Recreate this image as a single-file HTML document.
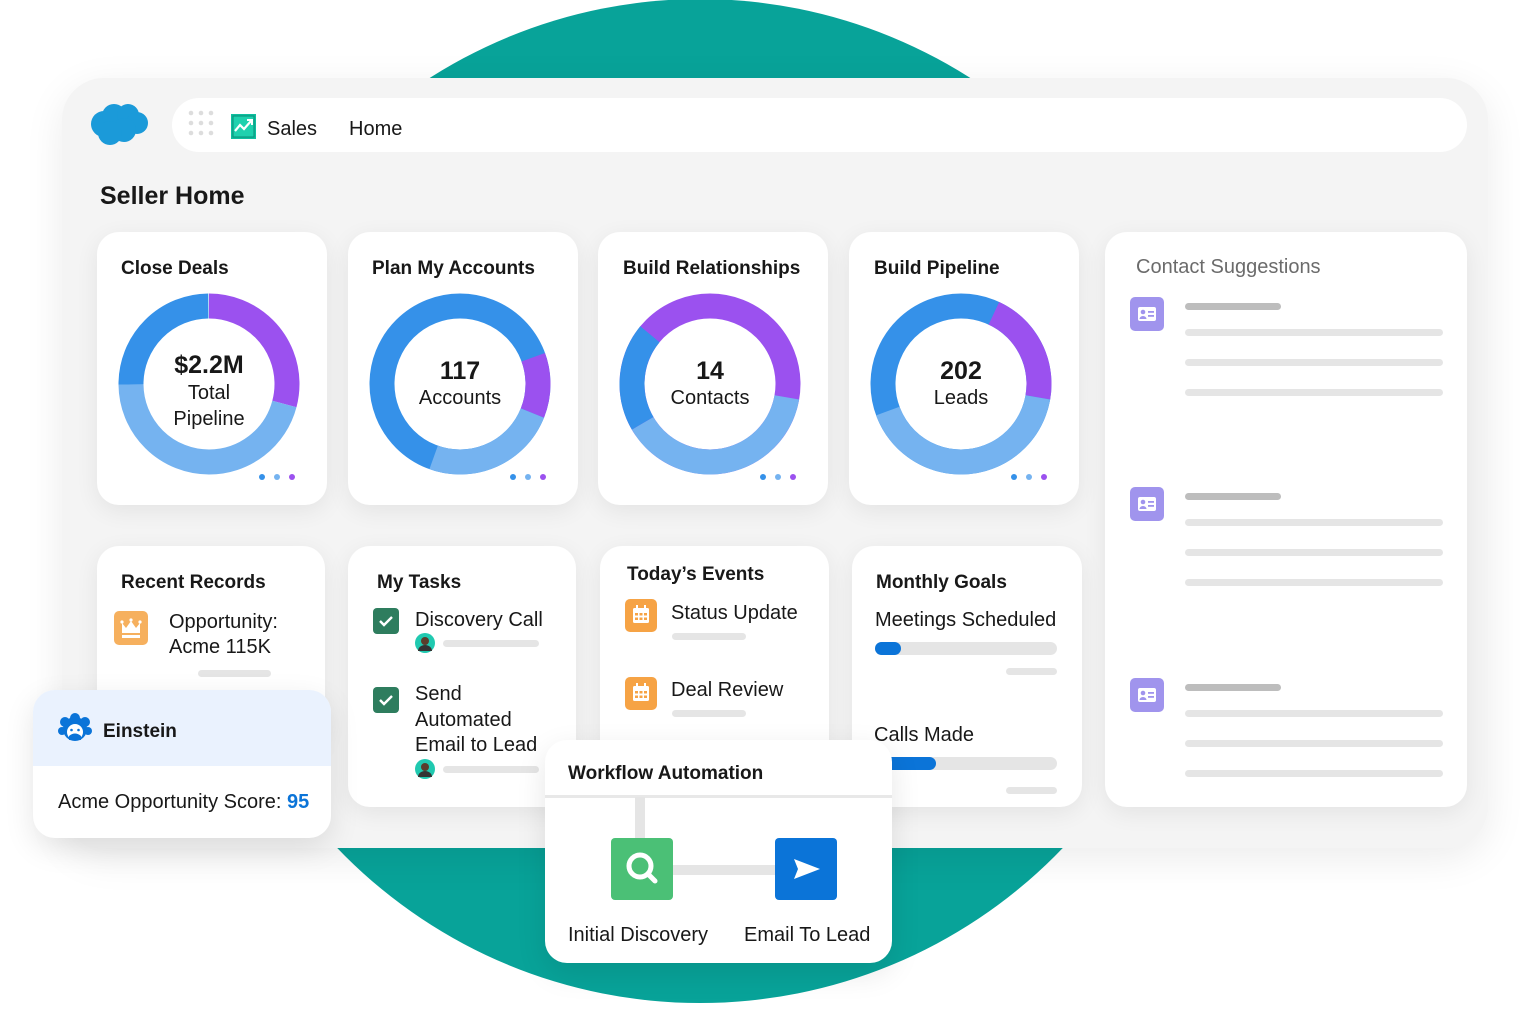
<!DOCTYPE html>
<html><head><meta charset="utf-8"><style>
*{margin:0;padding:0;box-sizing:border-box}
body{width:1536px;height:1024px;background:#fff;position:relative;overflow:hidden;font-family:"Liberation Sans",sans-serif;color:#181818}
.a{position:absolute}
.card{position:absolute;background:#fff;border-radius:22px;box-shadow:0 6px 24px rgba(0,0,0,.07)}
.t{position:absolute;font-weight:bold;font-size:19px;color:#181818;margin-top:2px}
.bar{position:absolute;height:7px;border-radius:4px;background:#e5e5e5}
.txt{position:absolute;font-size:20px;color:#181818;margin-top:1px}
</style></head><body>
<div class="a" style="left:198px;top:-1px;width:1004px;height:1004px;border-radius:50%;background:#08a399"></div>
<div class="a" style="left:62px;top:78px;width:1426px;height:770px;border-radius:42px;background:#f4f4f4;box-shadow:0 10px 40px rgba(0,0,0,.08)"></div>
<svg class="a" style="left:88px;top:102px" width="62" height="44" viewBox="0 0 62 44"><g fill="#1b9ad9"><circle cx="16" cy="22" r="13"/><circle cx="26" cy="14" r="12"/><circle cx="40" cy="13" r="11"/><circle cx="49" cy="21" r="11"/><circle cx="36" cy="28" r="12"/><circle cx="22" cy="31" r="12"/></g></svg>
<div class="a" style="left:172px;top:98px;width:1295px;height:54px;border-radius:27px;background:#fff"></div>
<svg class="a" style="left:187px;top:110px" width="28" height="28"><g fill="#ddd"><circle cx="4" cy="3" r="2.3"/><circle cx="14" cy="3" r="2.3"/><circle cx="24" cy="3" r="2.3"/><circle cx="4" cy="13" r="2.3"/><circle cx="14" cy="13" r="2.3"/><circle cx="24" cy="13" r="2.3"/><circle cx="4" cy="23" r="2.3"/><circle cx="14" cy="23" r="2.3"/><circle cx="24" cy="23" r="2.3"/></g></svg>
<svg class="a" style="left:231px;top:114px" width="25" height="25"><rect width="25" height="25" fill="#0fbf9f"/><rect x="2" y="2" width="21" height="21" fill="#1fd1ae" stroke="#0a8f78" stroke-width="1"/><path d="M4 17 L9 11 L13 15 L20 7" stroke="#fff" stroke-width="2.2" fill="none"/><path d="M16 6h5v5" stroke="#fff" stroke-width="2" fill="none"/></svg>
<div class="txt" style="left:267px;top:117px">Sales</div>
<div class="txt" style="left:349px;top:117px">Home</div>
<div class="a" style="left:100px;top:182px;font-size:25px;font-weight:bold">Seller Home</div>

<div class="card" style="left:97px;top:232px;width:230px;height:273px"></div>
<div class="card" style="left:348px;top:232px;width:230px;height:273px"></div>
<div class="card" style="left:598px;top:232px;width:230px;height:273px"></div>
<div class="card" style="left:849px;top:232px;width:230px;height:273px"></div>
<div class="t" style="left:121px;top:256px">Close Deals</div>
<div class="t" style="left:372px;top:256px">Plan My Accounts</div>
<div class="t" style="left:623px;top:256px">Build Relationships</div>
<div class="t" style="left:874px;top:256px">Build Pipeline</div>
<svg class="a" style="left:0;top:0" width="1100" height="520" fill="none" stroke-width="25">
<g transform="translate(209 384) rotate(-90)">
<circle r="78" pathLength="360" stroke="#9b51ef" stroke-dasharray="105 360"/>
<circle r="78" pathLength="360" stroke="#75b3f0" stroke-dasharray="165 360" stroke-dashoffset="-105"/>
<circle r="78" pathLength="360" stroke="#3591e9" stroke-dasharray="90 360" stroke-dashoffset="-270"/>
</g>
<g transform="translate(460 384) rotate(-90)">
<circle r="78" pathLength="360" stroke="#3591e9"/>
<circle r="78" pathLength="360" stroke="#9b51ef" stroke-dasharray="42 360" stroke-dashoffset="-70"/>
<circle r="78" pathLength="360" stroke="#75b3f0" stroke-dasharray="88 360" stroke-dashoffset="-112"/>
</g>
<g transform="translate(710 384) rotate(-90)">
<circle r="78" pathLength="360" stroke="#9b51ef"/>
<circle r="78" pathLength="360" stroke="#75b3f0" stroke-dasharray="140 360" stroke-dashoffset="-100"/>
<circle r="78" pathLength="360" stroke="#3591e9" stroke-dasharray="70 360" stroke-dashoffset="-240"/>
</g>
<g transform="translate(961 384) rotate(-90)">
<circle r="78" pathLength="360" stroke="#3591e9"/>
<circle r="78" pathLength="360" stroke="#9b51ef" stroke-dasharray="75 360" stroke-dashoffset="-25"/>
<circle r="78" pathLength="360" stroke="#75b3f0" stroke-dasharray="150 360" stroke-dashoffset="-100"/>
</g>
<g stroke="none">
<circle cx="262" cy="477" r="3" fill="#3591e9"/><circle cx="277" cy="477" r="3" fill="#75b3f0"/><circle cx="292" cy="477" r="3" fill="#9b51ef"/>
<circle cx="513" cy="477" r="3" fill="#3591e9"/><circle cx="528" cy="477" r="3" fill="#75b3f0"/><circle cx="543" cy="477" r="3" fill="#9b51ef"/>
<circle cx="763" cy="477" r="3" fill="#3591e9"/><circle cx="778" cy="477" r="3" fill="#75b3f0"/><circle cx="793" cy="477" r="3" fill="#9b51ef"/>
<circle cx="1014" cy="477" r="3" fill="#3591e9"/><circle cx="1029" cy="477" r="3" fill="#75b3f0"/><circle cx="1044" cy="477" r="3" fill="#9b51ef"/>
</g>
</svg>
<div class="a" style="left:129px;top:351px;width:160px;text-align:center;font-size:25px;font-weight:bold">$2.2M</div>
<div class="a" style="left:129px;top:380px;width:160px;text-align:center;font-size:20px;line-height:26px">Total<br>Pipeline</div>
<div class="a" style="left:380px;top:357px;width:160px;text-align:center;font-size:25px;font-weight:bold">117</div>
<div class="a" style="left:380px;top:387px;width:160px;text-align:center;font-size:20px">Accounts</div>
<div class="a" style="left:630px;top:357px;width:160px;text-align:center;font-size:25px;font-weight:bold">14</div>
<div class="a" style="left:630px;top:387px;width:160px;text-align:center;font-size:20px">Contacts</div>
<div class="a" style="left:881px;top:357px;width:160px;text-align:center;font-size:25px;font-weight:bold">202</div>
<div class="a" style="left:881px;top:387px;width:160px;text-align:center;font-size:20px">Leads</div>

<div class="card" style="left:1105px;top:232px;width:362px;height:575px"></div>
<div class="a" style="left:1136px;top:256px;font-size:20px;color:#6b6b6b">Contact Suggestions</div>
<svg class="a" style="left:1130px;top:297px" width="34" height="430">
<g id="ic"><rect width="34" height="34" rx="5" fill="#a094ed"/><rect x="8" y="10" width="18" height="14" rx="2" fill="#fff"/><circle cx="13" cy="15" r="2.3" fill="#a094ed"/><path d="M9.5 22a3.5 3 0 0 1 7 0z" fill="#a094ed"/><rect x="18" y="14" width="6" height="1.8" fill="#a094ed"/><rect x="18" y="18" width="6" height="1.8" fill="#a094ed"/></g>
<use href="#ic" y="190"/><use href="#ic" y="381"/></svg>
<div class="bar" style="left:1185px;top:303px;width:96px;background:#bdbdbd"></div>
<div class="bar" style="left:1185px;top:329px;width:258px"></div>
<div class="bar" style="left:1185px;top:359px;width:258px"></div>
<div class="bar" style="left:1185px;top:389px;width:258px"></div>
<div class="bar" style="left:1185px;top:493px;width:96px;background:#bdbdbd"></div>
<div class="bar" style="left:1185px;top:519px;width:258px"></div>
<div class="bar" style="left:1185px;top:549px;width:258px"></div>
<div class="bar" style="left:1185px;top:579px;width:258px"></div>
<div class="bar" style="left:1185px;top:684px;width:96px;background:#bdbdbd"></div>
<div class="bar" style="left:1185px;top:710px;width:258px"></div>
<div class="bar" style="left:1185px;top:740px;width:258px"></div>
<div class="bar" style="left:1185px;top:770px;width:258px"></div>

<div class="card" style="left:97px;top:546px;width:228px;height:200px"></div>
<div class="t" style="left:121px;top:570px">Recent Records</div>
<svg class="a" style="left:114px;top:611px" width="34" height="34"><rect width="34" height="34" rx="5" fill="#f6b05e"/><path d="M8 12l4 5 5-7 5 7 4-5v10H8z" fill="#fff"/><rect x="8" y="24" width="18" height="3" fill="#fff"/><circle cx="8" cy="11" r="1.6" fill="#fff"/><circle cx="17" cy="9" r="1.6" fill="#fff"/><circle cx="26" cy="11" r="1.6" fill="#fff"/></svg>
<div class="txt" style="left:169px;top:609px;line-height:25px">Opportunity:<br>Acme 115K</div>
<div class="bar" style="left:198px;top:670px;width:73px"></div>

<div class="card" style="left:348px;top:546px;width:228px;height:261px"></div>
<div class="t" style="left:377px;top:570px">My Tasks</div>
<svg class="a" style="left:373px;top:608px" width="26" height="26"><rect width="26" height="26" rx="4" fill="#2e7d5e"/><path d="M7 13l4 4 8-8" stroke="#fff" stroke-width="2.4" fill="none"/></svg>
<svg class="a" style="left:373px;top:687px" width="26" height="26"><rect width="26" height="26" rx="4" fill="#2e7d5e"/><path d="M7 13l4 4 8-8" stroke="#fff" stroke-width="2.4" fill="none"/></svg>
<div class="txt" style="left:415px;top:608px">Discovery Call</div>
<div class="txt" style="left:415px;top:681px;line-height:25.5px">Send<br>Automated<br>Email to Lead</div>
<svg class="a" style="left:415px;top:633px" width="20" height="20"><circle cx="10" cy="10" r="10" fill="#20c9b0"/><circle cx="10" cy="8" r="4" fill="#5a3d2b"/><path d="M3 18a7 6 0 0 1 14 0z" fill="#333"/></svg>
<svg class="a" style="left:415px;top:759px" width="20" height="20"><circle cx="10" cy="10" r="10" fill="#20c9b0"/><circle cx="10" cy="8" r="4" fill="#5a3d2b"/><path d="M3 18a7 6 0 0 1 14 0z" fill="#333"/></svg>
<div class="bar" style="left:443px;top:640px;width:96px"></div>
<div class="bar" style="left:443px;top:766px;width:96px"></div>

<div class="card" style="left:600px;top:546px;width:229px;height:220px"></div>
<div class="t" style="left:627px;top:562px">Today’s Events</div>
<svg class="a" style="left:625px;top:599px" width="32" height="33"><rect width="32" height="33" rx="5" fill="#f6a345"/><rect x="8" y="9" width="16" height="15" rx="1.5" fill="#fff"/><rect x="11" y="6" width="2" height="4" fill="#fff"/><rect x="19" y="6" width="2" height="4" fill="#fff"/><g fill="#f6a345"><rect x="10" y="14" width="3" height="2.5"/><rect x="14.5" y="14" width="3" height="2.5"/><rect x="19" y="14" width="3" height="2.5"/><rect x="10" y="18.5" width="3" height="2.5"/><rect x="14.5" y="18.5" width="3" height="2.5"/><rect x="19" y="18.5" width="3" height="2.5"/></g></svg>
<svg class="a" style="left:625px;top:677px" width="32" height="33"><rect width="32" height="33" rx="5" fill="#f6a345"/><rect x="8" y="9" width="16" height="15" rx="1.5" fill="#fff"/><rect x="11" y="6" width="2" height="4" fill="#fff"/><rect x="19" y="6" width="2" height="4" fill="#fff"/><g fill="#f6a345"><rect x="10" y="14" width="3" height="2.5"/><rect x="14.5" y="14" width="3" height="2.5"/><rect x="19" y="14" width="3" height="2.5"/><rect x="10" y="18.5" width="3" height="2.5"/><rect x="14.5" y="18.5" width="3" height="2.5"/><rect x="19" y="18.5" width="3" height="2.5"/></g></svg>
<div class="txt" style="left:671px;top:601px">Status Update</div>
<div class="txt" style="left:671px;top:678px">Deal Review</div>
<div class="bar" style="left:672px;top:633px;width:74px"></div>
<div class="bar" style="left:672px;top:710px;width:74px"></div>

<div class="card" style="left:852px;top:546px;width:230px;height:261px"></div>
<div class="t" style="left:876px;top:570px">Monthly Goals</div>
<div class="txt" style="left:875px;top:608px">Meetings Scheduled</div>
<div class="a" style="left:875px;top:642px;width:182px;height:13px;border-radius:7px;background:#e5e5e5"><div style="width:26px;height:13px;border-radius:7px;background:#0b74d8"></div></div>
<div class="bar" style="left:1006px;top:668px;width:51px"></div>
<div class="txt" style="left:874px;top:723px">Calls Made</div>
<div class="a" style="left:875px;top:757px;width:182px;height:13px;border-radius:7px;background:#e5e5e5"><div style="width:61px;height:13px;border-radius:7px;background:#0b74d8"></div></div>
<div class="bar" style="left:1006px;top:787px;width:51px"></div>

<div class="a" style="left:33px;top:690px;width:298px;height:148px;border-radius:22px;background:#fff;box-shadow:0 10px 30px rgba(0,0,0,.1);overflow:hidden"><div style="height:76px;background:#eaf2fe"></div></div>
<svg class="a" style="left:57px;top:713px" width="36" height="30"><g fill="#0b74d8"><circle cx="18" cy="16" r="12"/><circle cx="8" cy="9" r="5"/><circle cx="28" cy="9" r="5"/><circle cx="18" cy="5" r="5"/><circle cx="5" cy="18" r="4"/><circle cx="31" cy="18" r="4"/></g><circle cx="18" cy="19" r="8" fill="#fff"/><path d="M12 23q6-5 12 0v4h-12z" fill="#0b74d8"/><circle cx="14.5" cy="17" r="1.3" fill="#0b74d8"/><circle cx="21.5" cy="17" r="1.3" fill="#0b74d8"/></svg>
<div class="a" style="left:103px;top:721px;font-size:19px;font-weight:bold">Einstein</div>
<div class="txt" style="left:58px;top:790px">Acme Opportunity Score: <span style="color:#0b74d8;font-weight:bold">95</span></div>

<div class="a" style="left:545px;top:740px;width:347px;height:223px;border-radius:22px;background:#fff;box-shadow:0 10px 30px rgba(0,0,0,.1)"></div>
<div class="a" style="left:545px;top:795px;width:347px;height:3px;background:#e8e8e8"></div>
<div class="a" style="left:568px;top:763px;font-size:19px;font-weight:bold">Workflow Automation</div>
<div class="a" style="left:635px;top:797px;width:10px;height:42px;background:#e5e5e5"></div>
<div class="a" style="left:672px;top:865px;width:104px;height:10px;background:#e5e5e5"></div>
<svg class="a" style="left:611px;top:838px" width="62" height="62"><rect width="62" height="62" rx="4" fill="#4bc076"/><circle cx="29" cy="28" r="11" stroke="#fff" stroke-width="5" fill="none"/><path d="M37 36l7 7" stroke="#fff" stroke-width="5" stroke-linecap="round"/></svg>
<svg class="a" style="left:775px;top:838px" width="62" height="62"><rect width="62" height="62" rx="4" fill="#0b74d8"/><path d="M19 21l26 10-26 10 4-10z" fill="#fff"/></svg>
<div class="txt" style="left:568px;top:923px">Initial Discovery</div>
<div class="txt" style="left:744px;top:923px">Email To Lead</div>
</body></html>
